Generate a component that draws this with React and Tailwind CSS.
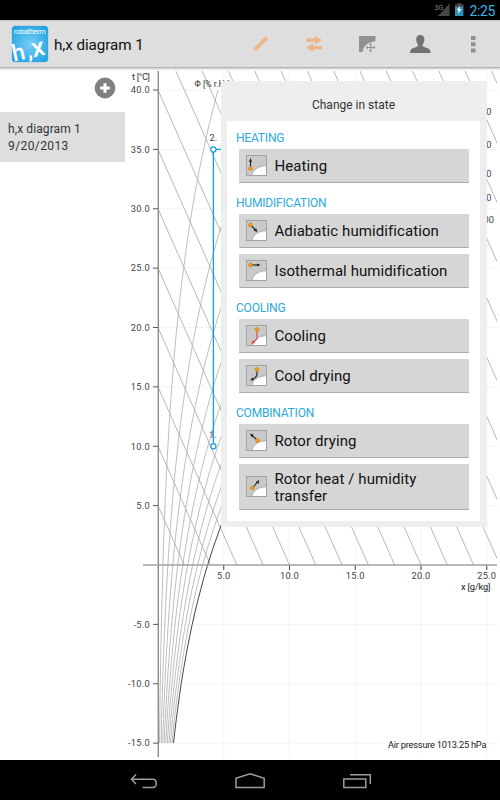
const X0 = 158;
const Y0 = 565;
const PX_PER_G = 13.15;
const PX_PER_DEG = 11.875;

const xPos = (g) => X0 + g * PX_PER_G;
const yPos = (t) => Y0 - t * PX_PER_DEG;

const temperatures = [40, 35, 30, 25, 20, 15, 10, 5, -5, -10, -15];
const contents = [5, 10, 15, 20, 25];
const humidities = [10, 20, 30, 40, 50, 60, 70, 80, 90, 100];

// Magnus formula, water content in g/kg at 1013.25 hPa
const waterContent = (t, rh) => {
  const p = (rh / 100) * 6.112 * Math.exp((17.62 * t) / (243.12 + t));
  return (622 * p) / (1013.25 - p);
};

const humidityLine = (rh) => {
  const points = [];
  for (let t = -15; t <= 40; t += 1) {
    const x = waterContent(t, rh);
    if (x > 25) break;
    points.push(`${xPos(x).toFixed(1)},${yPos(t).toFixed(1)}`);
  }
  return points.join(' ');
};

const Diagram = () => (
  <svg className="block h-[692px] w-[375px]" viewBox="125 68 375 692" fontFamily="Roboto, sans-serif" fontSize="9.3" fill="#444">
    <defs>
      <clipPath id="plot">
        <rect x="158" y="71" width="339" height="494" />
      </clipPath>
    </defs>
    <g stroke="#f4f4f4">
      {temperatures.map((t) => (
        <line key={t} x1="158" x2="497" y1={yPos(t)} y2={yPos(t)} />
      ))}
      {contents.map((g) => (
        <line key={g} x1={xPos(g)} x2={xPos(g)} y1="71" y2="757" />
      ))}
    </g>
    <g clipPath="url(#plot)" stroke="#b0b0b0" strokeWidth="0.9">
      {Array.from({ length: 22 }, (_, i) => i + 1).map((k) => (
        <line key={k} x1={xPos(2 * k) - 263} y1={Y0 - 593.75} x2={xPos(2 * k)} y2={Y0} />
      ))}
    </g>
    {humidities.map((rh) => (
      <polyline
        key={rh}
        points={humidityLine(rh)}
        fill="none"
        stroke={rh === 100 ? '#444' : '#b2b2b2'}
        strokeWidth={rh === 100 ? 1 : 0.85}
      />
    ))}
    <path d="M158.3 71V757" stroke="#8c8c8c" strokeWidth="1.4" />
    <path d="M143 565H497" stroke="#a0a0a0" strokeWidth="1.6" />
    {temperatures.map((t) => (
      <g key={t}>
        <path d={`M153 ${yPos(t)}H158`} stroke="#555" />
        <text x="150" y={yPos(t) + 3.3} textAnchor="end" letterSpacing="0.25">{t.toFixed(1)}</text>
      </g>
    ))}
    {contents.map((g) => (
      <g key={g}>
        <path d={`M${xPos(g)} 565.5V570`} stroke="#444" />
        <text x={xPos(g)} y="579" textAnchor="middle" letterSpacing="0.2">{g.toFixed(1)}</text>
      </g>
    ))}
    <text x="132" y="80" textLength="18" fill="#333">t [°C]</text>
    <text x="194.5" y="87" textLength="35" lengthAdjust="spacingAndGlyphs" fill="#333">Φ [% r.H.]</text>
    <text x="461" y="590" textLength="29.5" fill="#222">x [g/kg]</text>
    <text x="388" y="748" textLength="98.5" fill="#222">Air pressure 1013.25 hPa</text>
    <text x="491.500" y="114.5" textAnchor="end">60</text>
    <text x="491.500" y="147.5" textAnchor="end">70</text>
    <text x="491.500" y="176.5" textAnchor="end">80</text>
    <text x="491.500" y="200.5" textAnchor="end">90</text>
    <text x="494" y="222.5" textAnchor="end">100</text>
    <text x="209.5" y="141">2.</text>
    <text x="209" y="437.5" fontWeight="700" fill="#888">1.</text>
    <path d="M213.4 446V149.4H240" fill="none" stroke="#0d9fe8" strokeWidth="1.3" />
    <g fill="#fff" stroke="#0d9fe8" strokeWidth="1.2">
      <circle cx="213.4" cy="149.5" r="2.6" />
      <circle cx="213.4" cy="446.3" r="2.6" />
    </g>
  </svg>
);

const StatusBar = () => (
  <div className="flex h-5 items-center justify-end bg-black pr-[5px]">
    <svg className="h-5 w-[34px]" viewBox="434 0 34 20">
      <text x="434.5" y="9.5" fontFamily="Roboto, sans-serif" fontSize="7" fill="#8a8a8a">3G</text>
      <path d="M449.500 3.500V16H438Z" fill="#474747" />
      <path d="M457.500 3.500h3.500v1.300h2.400V16h-8.400V4.800h2.500z" fill="#2b93bb" />
      <path d="M457.500 3.500h3.500v1.300h2.400V7h-8.400V4.800h2.500z" fill="#4a4a4a" />
      <path d="M460.300 5.500l-3.600 4.800h2l-.8 3.700 3.800-5h-2.200z" fill="#fff" />
    </svg>
    <span className="ml-[2px] pt-[2px] text-[14px] leading-5 tracking-[-0.400px] text-[#33b5e5]">2:25</span>
  </div>
);

const Logo = () => (
  <svg className="ml-3 h-9 w-9 shrink-0 overflow-visible" viewBox="0 0 36 36">
    <defs>
      <radialGradient id="logo" cx="0.5" cy="0.5" r="0.65">
        <stop offset="0" stopColor="#7accf6" />
        <stop offset="1" stopColor="#1aa3e4" />
      </radialGradient>
    </defs>
    <rect x="0.3" y="0.3" width="35.4" height="35.4" rx="2.5" fill="url(#logo)" stroke="#1791cf" strokeWidth="0.6" />
    <g fill="#fff" fontFamily="Roboto, sans-serif">
      <text x="1.800" y="8" fontSize="7.400" textLength="32">robatherm</text>
      <text transform="translate(1.800 35.500) rotate(-12)" fontSize="23" fontWeight="500">
        h<tspan dx="2">,</tspan><tspan fontSize="26">x</tspan>
      </text>
    </g>
  </svg>
);

const ActionBar = () => (
  <div className="flex h-12 items-center border-y border-t-[#c8c8c8] border-b-[#b4b4b4] bg-[#dedede] shadow-[0_1px_2px_rgba(0,0,0,0.25)]">
    <Logo />
    <h1 className="ml-[6px] w-[186px] shrink-0 pt-[2px] text-[15.200px] tracking-[-0.050px] whitespace-nowrap text-[#111]">h,x diagram 1</h1>
    <svg className="h-11 w-[260px] shrink-0" viewBox="240 22 260 44">
      <path d="M264.300 37.200c1-1 1.600-1 2.400-.2l.7.700c.8.800.8 1.500-.1 2.400l-10.300 9.800-3.500 1.600 1.200-4.300z" fill="#edb788" />
      <path d="M306 38.300h9v-2.600l7 4.400-7 4.400v-2.700h-9zM322 45.900h-9v-2.600l-7 4.400 7 4.400v-2.700h9z" fill="#edb788" />
      <path d="M359 36h16.500v5.200c-7 .6-12.500 4.800-13 10.800H359z" fill="#8f928f" />
      <path d="M370.700 43.500v8M366.700 47.500h8M369.300 44.700l1.400-1.400 1.400 1.400M369.300 50.300l1.400 1.400 1.400-1.400M367.900 46.100l-1.400 1.400 1.400 1.400M373.500 46.100l1.400 1.400-1.400 1.400" fill="none" stroke="#8f928f" />
      <path d="M420.300 35c2.700 0 4.300 1.700 4.100 4.600-.1 2.300-.8 3.700-1.700 4.800v1.600c1 1.300 5.500 1.900 7 3.700.7.800.8 1.800.8 3.300h-20.400c0-1.500.1-2.500.8-3.300 1.500-1.800 6-2.400 7-3.700v-1.600c-.9-1.100-1.600-2.500-1.700-4.800-.2-2.900 1.400-4.600 4.100-4.600z" fill="#727272" />
      <path d="M471 36h4.500v4H471zM471 42.200h4.500v4H471zM471 48.400h4.500v4H471z" fill="#8f8f8f" />
    </svg>
  </div>
);

const Sidebar = () => (
  <div className="w-[125px] shrink-0">
    <div className="flex h-11 items-start justify-end pt-[9px] pr-[9px]">
      <svg className="h-[22px] w-[22px]" viewBox="0 0 22 22">
        <circle cx="11" cy="11" r="10.400" fill="#808080" />
        <path d="M11 6.200v9.600M6.200 11h9.600" stroke="#fff" strokeWidth="3" />
      </svg>
    </div>
    <div className="h-[50px] bg-[#dedede] pt-[9px] pl-2 text-[12px] leading-[17px] text-[#333]">
      <p className="tracking-[0.100px]">h,x diagram 1</p>
      <p className="tracking-[0.400px]">9/20/2013</p>
    </div>
  </div>
);

const arrows = {
  heating: { dot: [4.5, 13.5], line: 'M4.500 13V5', head: '4.500,3 3,7 6,7' },
  adiabatic: { dot: [4.5, 5], line: 'M4.500 5L9.500 10', head: '11.500,12 10.200,8.200 7.700,10.700' },
  isothermal: { dot: [4.5, 5], line: 'M4.500 5H12', head: '14.500,5 11,3.500 11,6.500' },
  cooling: { dot: [11, 4.5], line: 'M11 5V13.500L7 18', head: '5.500,19.500 6.300,15.600 8.900,17.500', color: '#ee3b3b' },
  coolDrying: { dot: [11, 4.5], line: 'M11 5V9Q11 12 7 14', head: '4,15.500 6.500,12.500 8,15.300' },
  rotorDrying: { dot: [11.5, 10.5], line: 'M11 10L6 5.500', head: '4,3.500 7.700,4.800 5.500,7.200' },
  rotorHeat: { dot: [6.5, 12], line: 'M6.500 12L11.500 6', head: '13.200,4 12.500,8 9.900,5.800' },
};

const StateIcon = ({ type }) => {
  const { dot, line, head, color = '#222' } = arrows[type];
  return (
    <svg className="h-[21px] w-[21px] shrink-0" viewBox="0 0 21 21">
      <rect x="0.500" y="0.500" width="20" height="20" fill="#c9c9c9" stroke="#a2a2a2" />
      <path d="M6 20C7.500 14 13 11 20 10.800V20Z" fill="#fff" />
      <path d="M6 20C7.500 14 13 11 20 10.800" fill="none" stroke="#999" strokeWidth="0.700" />
      <path d={line} fill="none" stroke={color} strokeWidth="1.100" />
      <polygon points={head} fill={color} />
      <circle cx={dot[0]} cy={dot[1]} r="2" fill="#f59a16" stroke="#b9791f" strokeWidth="0.500" />
    </svg>
  );
};

const StateButton = ({ type, children }) => (
  <button className="flex min-h-[34px] w-[230px] items-center gap-[7.500px] rounded-[1px] border-b border-[#aaa] bg-[#d6d6d6] pl-[7px] text-left text-[15px] leading-[17px] tracking-[0.080px] text-[#111]">
    <StateIcon type={type} />
    <span className="pt-[2px]">{children}</span>
  </button>
);

const Group = ({ title, children }) => (
  <section>
    <h3 className="-ml-[3px] h-[19px] text-[12px] leading-4 tracking-[-0.200px] text-[#2ba9dd]">{title}</h3>
    <div className="flex flex-col gap-[6px]">{children}</div>
  </section>
);

const ChangeInState = () => (
  <div className="absolute top-[13px] left-[221px] h-[446px] w-[266px] bg-[#eee] pr-[7px] pl-[6px]">
    <h2 className="h-10 pt-4 text-center text-[12px] leading-4 text-[#333]">Change in state</h2>
    <div className="flex h-[400px] flex-col gap-[12px] bg-white pt-[9px] pl-3">
      <Group title="HEATING">
        <StateButton type="heating">Heating</StateButton>
      </Group>
      <Group title="HUMIDIFICATION">
        <StateButton type="adiabatic">Adiabatic humidification</StateButton>
        <StateButton type="isothermal">Isothermal humidification</StateButton>
      </Group>
      <Group title="COOLING">
        <StateButton type="cooling">Cooling</StateButton>
        <StateButton type="coolDrying">Cool drying</StateButton>
      </Group>
      <Group title="COMBINATION">
        <StateButton type="rotorDrying">Rotor drying</StateButton>
        <div className="flex *:h-[46px]">
          <StateButton type="rotorHeat">
            Rotor heat / humidity
            <br />
            transfer
          </StateButton>
        </div>
      </Group>
    </div>
  </div>
);

const NavBar = () => (
  <div className="flex h-10 bg-black">
    <svg className="ml-[120px] h-10 w-[260px]" viewBox="120 760 260 40" fill="none" stroke="#9d9d9d" strokeWidth="1.500">
      <path d="M136 774.500l-4.500 4.700 4.500 4.700M132 779.200h20.500c2.400 0 3.800 1.300 3.800 4s-1.400 4.300-3.800 4.300h-10" />
      <path d="M236 787.500v-9.200l14-4.600 14.200 4.600v9.200z" />
      <path d="M343.800 779h22v8.500h-22zM350 774.700h20.300v9.300" />
    </svg>
  </div>
);

const App = () => (
  <div className="flex h-[800px] w-[500px] flex-col overflow-hidden bg-white font-[Roboto,sans-serif]">
    <StatusBar />
    <ActionBar />
    <main className="relative flex h-[692px]">
      <Sidebar />
      <Diagram />
      <ChangeInState />
    </main>
    <NavBar />
  </div>
);

export default App;
